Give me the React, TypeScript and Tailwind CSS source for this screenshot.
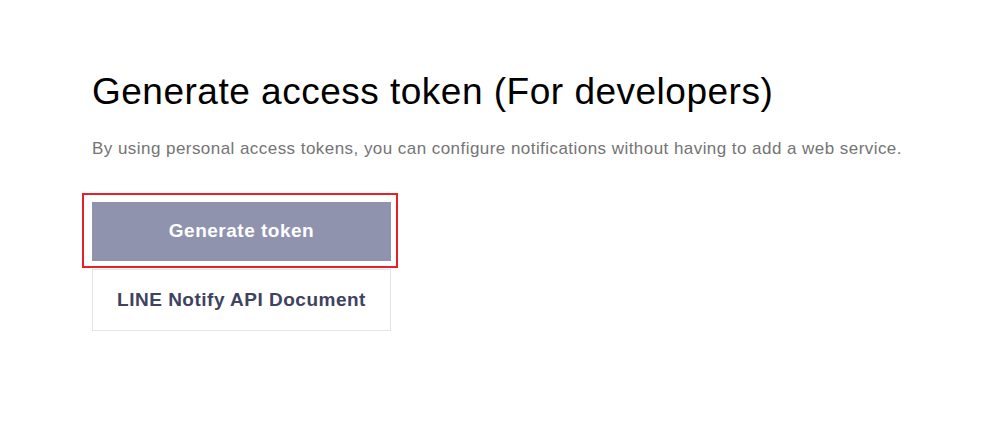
export default function App() {
  return (
    <div className="w-[982px] h-[421px] bg-white pl-[92px] pt-[70px]" style={{ fontFamily: '"Liberation Sans", Arial, sans-serif' }}>
      <h1 className="text-[37px] leading-[44px] tracking-[0.5px] text-black font-normal">Generate access token (For developers)</h1>
      <p className="mt-[25px] text-[17px] leading-[20px] tracking-[0.45px] text-[#747474]">
        By using personal access tokens, you can configure notifications without having to add a web service.
      </p>
      <div className="mt-[43px] flex flex-col w-[299px]">
        <div className="relative">
          <button className="w-[299px] h-[59px] bg-[#8f93ae] text-white text-[19px] tracking-[0.5px] font-bold flex items-center justify-center">
            Generate token
          </button>
          <div className="absolute left-[-10px] right-[-7px] top-[-9px] bottom-[-7px] border-2 border-[#e8202b] pointer-events-none" />
        </div>
        <button className="mt-[8px] w-[299px] h-[62px] bg-white border border-[#e5e5e5] text-[#3f4260] text-[19px] tracking-[0.5px] font-bold flex items-center justify-center">
          LINE Notify API Document
        </button>
      </div>
    </div>
  );
}
